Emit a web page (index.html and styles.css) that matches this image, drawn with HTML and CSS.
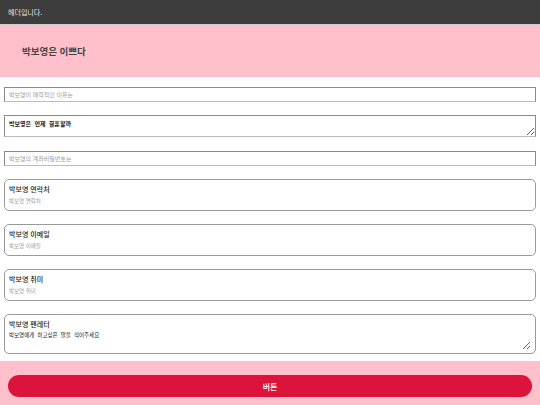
FILE: index.html
```html
<!DOCTYPE html>
<html lang="ko">
<head>
<meta charset="utf-8">
<link rel="stylesheet" href="styles.css">
</head>
<body>
<header class="topbar">헤더입니다.</header>
<section class="hero"><h1 class="hero-title">박보영은 이쁘다</h1></section>
<main class="form">
  <input class="plain-input" type="text" placeholder="박보영이 매력적인 이유는">
  <textarea class="plain-area">박보영은  언제  결혼할까</textarea>
  <input class="plain-input" type="text" placeholder="박보영의 계좌비밀번호는">
  <div class="card">
    <label class="card-label">박보영 연락처</label>
    <input class="card-input" type="text" placeholder="박보영 연락처">
  </div>
  <div class="card">
    <label class="card-label">박보영 이메일</label>
    <input class="card-input" type="text" placeholder="박보영 이메일">
  </div>
  <div class="card">
    <label class="card-label">박보영 취미</label>
    <input class="card-input" type="text" placeholder="박보영 취미">
  </div>
  <div class="card card-tall">
    <label class="card-label">박보영 팬레터</label>
    <textarea class="card-area">박보영에게  하고싶은  말을  적어주세요</textarea>
  </div>
</main>
<footer class="bottom">
  <button class="main-btn" type="button">버튼</button>
</footer>
</body>
</html>
```

FILE: styles.css
```css
* { box-sizing: border-box; }
html, body { margin: 0; padding: 0; background: #fff; }
body {
  font-family: "Noto Sans CJK KR", "Noto Sans", sans-serif;
  width: 540px;
  height: 405px;
  overflow: hidden;
  display: flex;
  flex-direction: column;
}
.topbar {
  flex: none;
  height: 25px;
  background: #3d3d3d;
  color: #e6e6e6;
  font-size: 7px;
  line-height: 24px;
  padding-left: 8px;
  border-bottom: 1px solid #cfcfcf;
}
.hero {
  flex: none;
  height: 52px;
  background: #ffc0cb;
  display: flex;
  align-items: center;
  padding-left: 22px;
}
.hero-title {
  margin: 0;
  font-size: 9.5px;
  font-weight: 700;
  color: #444;
}
.form {
  flex: none;
  padding: 10px 4px 0;
  display: flex;
  flex-direction: column;
}
.plain-input, .plain-area {
  width: 532px;
  margin: 0 0 13px;
  border: 1px solid #8a8a8a;
  border-bottom-color: #bdbdbd;
  border-radius: 0;
  font-family: inherit;
  font-size: 6px;
  color: #222;
  padding: 0 4px;
  outline: none;
  background: #fff;
}
.plain-input { height: 15px; }
.plain-area {
  height: 22px;
  padding: 4px 4px;
  resize: vertical;
  font-weight: 600;
  line-height: 8px;
  margin-bottom: 14px;
}
.plain-input::placeholder, .card-input::placeholder { color: #a0a0a0; }
.card {
  border: 1px solid #9a9a9a;
  border-radius: 5px;
  height: 32px;
  margin-bottom: 13px;
  padding: 4px 4px 0;
  display: flex;
  flex-direction: column;
}
.card-tall { height: 40px; margin-bottom: 7px; }
.card-label {
  font-size: 7px;
  font-weight: 500;
  color: #222;
  line-height: 10px;
}
.card-input {
  border: none;
  outline: none;
  padding: 0;
  margin-top: 2px;
  font-family: inherit;
  font-size: 5.5px;
  height: 9px;
  color: #222;
  background: transparent;
}
.card-area {
  border: none;
  outline: none;
  padding: 0;
  margin-top: 2px;
  font-family: inherit;
  font-size: 5.5px;
  line-height: 8px;
  color: #222;
  flex: 1;
  margin-bottom: 3px;
  resize: vertical;
  background: transparent;
}
.bottom {
  flex: 1;
  background: #ffc0cb;
  padding: 14px 8px 0;
}
.main-btn {
  display: block;
  width: 100%;
  height: 22px;
  border: none;
  border-radius: 11px;
  background: #dc143c;
  color: #fff;
  font-family: inherit;
  font-size: 8px;
  font-weight: 500;
}
```
